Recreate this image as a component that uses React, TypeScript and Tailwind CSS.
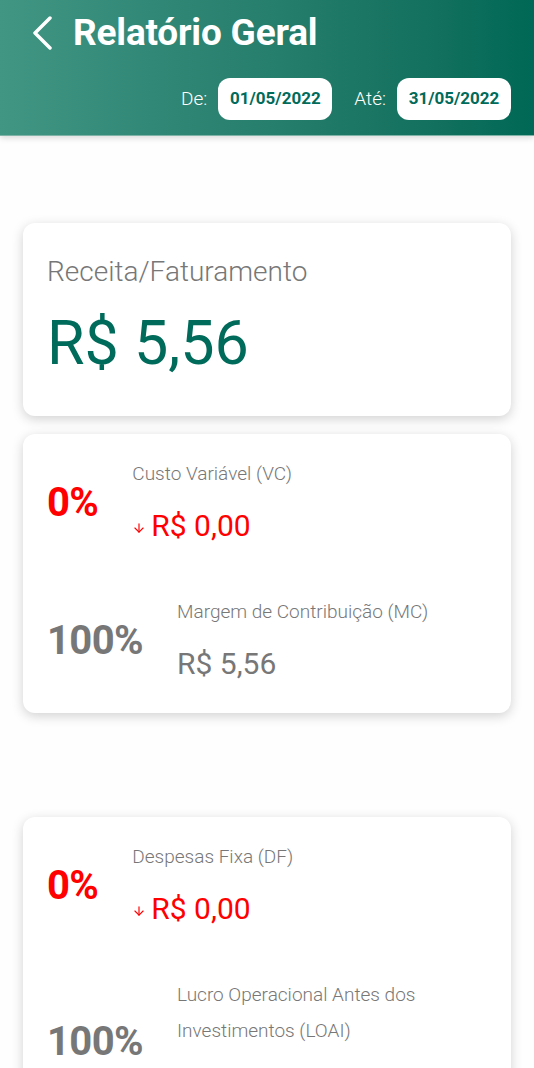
import { ArrowDown } from 'lucide-react';

function DatePill({ value }: { value: string }) {
  return (
    <div className="bg-white rounded-[12px] h-[42px] w-[114px] flex items-center justify-center text-[#006b5a] text-[17px] font-bold">
      {value}
    </div>
  );
}

function Row({
  pct,
  label,
  value,
  negative,
}: {
  pct: string;
  label: string;
  value: string;
  negative?: boolean;
}) {
  const color = negative ? 'text-[#ff0000]' : 'text-[#777777]';
  return (
    <div className="flex items-center gap-[34px]">
      <div className={`${color} text-[40px] font-bold tracking-[-0.6px] shrink-0`}>{pct}</div>
      <div className="flex flex-col">
        <div className="text-[#777777] text-[19px] font-light leading-[36px]">{label}</div>
        <div className={`${color} text-[30px] leading-[48px] mt-[10px] flex items-center`}>
          {negative && <ArrowDown className="w-[14px] h-[14px] mr-[5px] mt-[4px]" strokeWidth={2} />}
          {value}
        </div>
      </div>
    </div>
  );
}

export default function App() {
  return (
    <div className="min-h-[1068px] bg-[#fefefe]" style={{ fontFamily: 'Roboto, sans-serif' }}>
      <header className="h-[136px] bg-gradient-to-r from-[#409583] to-[#006856] border-b border-[#7fb3a8] shadow-[0_2px_6px_rgba(0,0,0,0.15)] px-[23px] pt-[10px] flex flex-col">
        <div className="flex items-center text-white h-[46px]">
          <svg width="24" height="34" viewBox="0 0 24 34" className="ml-[8px] mr-[18px]">
            <polyline points="19,2 4,17 19,32" fill="none" stroke="white" strokeWidth="3.5" strokeLinecap="round" strokeLinejoin="round" />
          </svg>
          <h1 className="text-[37px] font-bold tracking-[-0.2px]">Relatório Geral</h1>
        </div>
        <div className="flex items-center justify-end mt-[22px] text-white text-[19px] font-light">
          <span className="mr-[11px]">De:</span>
          <DatePill value="01/05/2022" />
          <span className="ml-[22px] mr-[11px]">Até:</span>
          <DatePill value="31/05/2022" />
        </div>
      </header>

      <main className="px-[23px] pt-[87px] flex flex-col">
        <section className="bg-white rounded-[12px] shadow-[0_3px_12px_rgba(0,0,0,0.18)] px-[24px] pt-[28px] h-[193px]">
          <div className="text-[#777777] text-[28px] font-light">Receita/Faturamento</div>
          <div className="text-[#006b5a] text-[61px] leading-[80px] mt-[10px]">R$ 5,56</div>
        </section>

        <section className="mt-[18px] bg-white rounded-[12px] shadow-[0_3px_12px_rgba(0,0,0,0.18)] px-[24px] pt-[22px] pb-[25px] flex flex-col gap-[44px]">
          <Row pct="0%" label="Custo Variável (VC)" value="R$ 0,00" negative />
          <Row pct="100%" label="Margem de Contribuição (MC)" value="R$ 5,56" />
        </section>

        <section className="mt-[104px] bg-white rounded-[12px] shadow-[0_3px_12px_rgba(0,0,0,0.18)] px-[24px] pt-[22px] pb-[25px] flex flex-col gap-[44px]">
          <Row pct="0%" label="Despesas Fixa (DF)" value="R$ 0,00" negative />
          <Row
            pct="100%"
            label="Lucro Operacional Antes dos Investimentos (LOAI)"
            value="R$ 5,56"
          />
        </section>
      </main>
    </div>
  );
}
